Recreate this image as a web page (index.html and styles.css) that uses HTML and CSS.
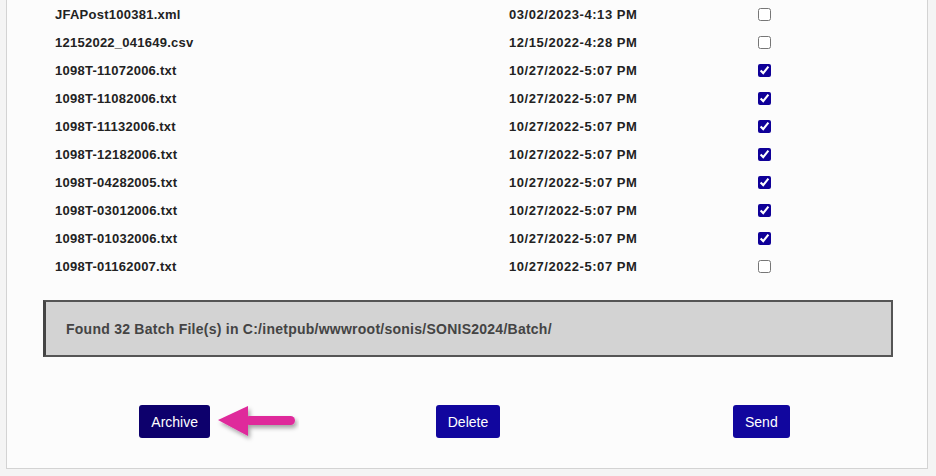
FILE: index.html
```html
<!DOCTYPE html>
<html>
<head>
<meta charset="utf-8">
<link rel="stylesheet" href="styles.css">
</head>
<body>
<div class="panel">
  <div class="files">
    <div class="row"><span class="name">JFAPost100381.xml</span><span class="date">03/02/2023-4:13 PM</span><input type="checkbox" class="chk"></div>
    <div class="row"><span class="name">12152022_041649.csv</span><span class="date">12/15/2022-4:28 PM</span><input type="checkbox" class="chk"></div>
    <div class="row"><span class="name">1098T-11072006.txt</span><span class="date">10/27/2022-5:07 PM</span><input type="checkbox" class="chk" checked></div>
    <div class="row"><span class="name">1098T-11082006.txt</span><span class="date">10/27/2022-5:07 PM</span><input type="checkbox" class="chk" checked></div>
    <div class="row"><span class="name">1098T-11132006.txt</span><span class="date">10/27/2022-5:07 PM</span><input type="checkbox" class="chk" checked></div>
    <div class="row"><span class="name">1098T-12182006.txt</span><span class="date">10/27/2022-5:07 PM</span><input type="checkbox" class="chk" checked></div>
    <div class="row"><span class="name">1098T-04282005.txt</span><span class="date">10/27/2022-5:07 PM</span><input type="checkbox" class="chk" checked></div>
    <div class="row"><span class="name">1098T-03012006.txt</span><span class="date">10/27/2022-5:07 PM</span><input type="checkbox" class="chk" checked></div>
    <div class="row"><span class="name">1098T-01032006.txt</span><span class="date">10/27/2022-5:07 PM</span><input type="checkbox" class="chk" checked></div>
    <div class="row"><span class="name">1098T-01162007.txt</span><span class="date">10/27/2022-5:07 PM</span><input type="checkbox" class="chk"></div>
  </div>
  <div class="notice">Found 32 Batch File(s) in C:/inetpub/wwwroot/sonis/SONIS2024/Batch/</div>
  <div class="actions">
    <div class="cell">
      <button class="btn btn-active">Archive</button>
      <svg class="arrow" width="84" height="40" viewBox="0 0 84 40">
        <defs>
          <filter id="sh" x="-20%" y="-30%" width="150%" height="170%">
            <feDropShadow dx="2" dy="3" stdDeviation="2" flood-color="#000" flood-opacity="0.35"/>
          </filter>
        </defs>
        <g filter="url(#sh)" fill="#df2a9b">
          <polygon points="3,17 33,3 33,33"/>
          <rect x="30" y="13" width="50" height="9" rx="4.5"/>
        </g>
      </svg>
    </div>
    <div class="cell"><button class="btn">Delete</button></div>
    <div class="cell"><button class="btn">Send</button></div>
  </div>
</div>
</body>
</html>
```

FILE: styles.css
```css
html, body {
  margin: 0;
  padding: 0;
  background: #f4f4f4;
  font-family: "Liberation Sans", Arial, sans-serif;
}

.panel {
  margin-left: 6px;
  width: 922px;
  height: 469px;
  background: #fcfcfc;
  border: 1px solid #d3d3d3;
  border-top: none;
  box-sizing: border-box;
  position: relative;
}

.files {
  padding-left: 48px;
}

.row {
  display: grid;
  grid-template-columns: 454px 249px 13px;
  height: 28px;
  align-items: center;
  font-size: 13px;
  font-weight: bold;
  color: #222;
}

.name {
  letter-spacing: 0.25px;
}

.date {
  letter-spacing: 0.55px;
}

.chk {
  margin: 0;
  width: 13px;
  height: 13px;
  accent-color: #0f0098;
}

.notice {
  margin: 20px 0 0 36px;
  width: 850px;
  height: 57px;
  box-sizing: border-box;
  background: #d3d3d3;
  border: 2px solid #555;
  border-left-width: 3px;
  border-left-color: #444;
  padding-left: 20px;
  display: flex;
  align-items: center;
  font-size: 14px;
  letter-spacing: 0.25px;
  font-weight: bold;
  color: #444;
}

.actions {
  margin: 48px 0 0 21px;
  width: 880px;
  display: grid;
  grid-template-columns: repeat(3, 1fr);
}

.cell {
  display: flex;
  justify-content: center;
  position: relative;
}

.btn {
  height: 33px;
  padding: 0 12px;
  border: none;
  border-radius: 3px;
  background: #11069e;
  color: #fff;
  font-family: "Liberation Sans", Arial, sans-serif;
  font-size: 14px;
}

.btn-active {
  background: #0d006c;
}

.arrow {
  position: absolute;
  left: 187px;
  top: -2px;
}
```
